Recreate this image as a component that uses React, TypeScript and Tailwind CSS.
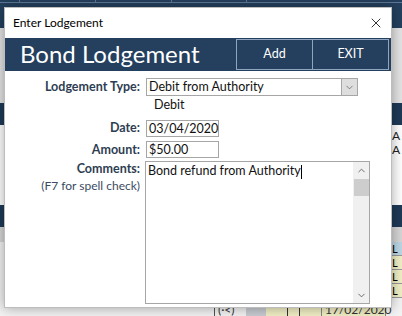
import { X, ChevronDown, ChevronUp } from 'lucide-react';

const font = { fontFamily: 'Lato, "Noto Sans", sans-serif' };

function Field({ label, children }: { label: string; children: React.ReactNode }) {
  return (
    <div className="flex items-center">
      <div className="w-[137px] text-right pr-[6px] text-[12.5px] font-bold text-[#2e3e52]">{label}</div>
      {children}
    </div>
  );
}

export default function App() {
  return (
    <div className="relative w-[402px] h-[316px] overflow-hidden bg-[#f3f3f3] text-[12px]" style={font}>
      {/* background app behind the dialog */}
      <div className="h-[28px] bg-[#24405e] flex items-start">
        <div className="h-[3px] w-full border-b border-[#5f7896] flex">
          <div className="w-[20px] border-r border-[#5f7896]" />
          <div className="w-[76px] border-r border-[#5f7896]" />
          <div className="w-[76px] border-r border-[#5f7896]" />
          <div className="w-[75px] border-r border-[#5f7896]" />
        </div>
      </div>
      <div className="h-[75px] bg-[#e4e4e4]" />
      <div className="h-[22px] bg-[#1f3a57]" />
      <div className="h-[80px] bg-white flex justify-end pt-[4px] text-[#222] text-[12px] leading-[14px]">
        <div className="flex flex-col w-[10px]">
          <span>A</span>
          <span>A</span>
        </div>
      </div>
      <div className="h-[22px] bg-[#1f3a57]" />
      <div className="h-[15px] bg-[#d6d6d6]" />
      <div className="flex flex-col items-end text-[11px] leading-[13px]">
        <div className="w-[10px] h-[14px] bg-[#bcd7e4] border-b border-[#999]">L</div>
        <div className="w-[10px] h-[14px] bg-[#f1efc4] border-b border-[#999]">L</div>
        <div className="w-[10px] h-[14px] bg-[#f1efc4] border-b border-[#999]">L</div>
        <div className="w-[10px] h-[14px] bg-[#f1efc4] border-b border-[#999]">L</div>
      </div>
      <div className="absolute left-[214px] top-[304px] flex text-[12px] leading-[12px] text-[#333]">
        <div className="w-[32px] border-l border-[#555] px-[3px]">(·&lt;)</div>
        <div className="w-[20px] bg-[#c8ccd2]" />
        <div className="w-[22px] bg-[#f1efc4] border-r border-[#333]" />
        <div className="w-[12px] bg-[#f1efc4] border-r border-[#333]" />
        <div className="w-[22px] bg-[#f1efc4] border-r border-[#888]" />
        <div className="w-[64px] bg-[#f1efc4] border-r border-[#888] px-[3px]">17/02/2020</div>
      </div>

      {/* dialog window */}
      <div className="absolute left-[4px] top-[7px] w-[388px] h-[301px] bg-white border border-[#bdbdbd] shadow-[0_0_12px_rgba(0,0,0,0.35)] flex flex-col">
        <div className="h-[30px] flex items-center justify-between pl-[8px] pr-[7px] text-[12px] text-black">
          <span>Enter Lodgement</span>
          <X size={16} strokeWidth={1.2} />
        </div>
        <div className="h-[33px] bg-[#24405e] flex items-center pr-[2px]">
          <div className="flex-1 pl-[15px] text-white text-[24px] leading-none pb-[1px]">Bond Lodgement</div>
          <div className="flex h-[31px] border border-[#8ea4bf]">
            <div className="w-[76px] flex items-center justify-center text-white text-[12.5px] border-r border-[#8ea4bf]">Add</div>
            <div className="w-[75px] flex items-center justify-center text-white text-[12.5px]">EXIT</div>
          </div>
        </div>

        <div className="flex flex-col pt-[7px] pl-[4px]">
          <Field label="Lodgement Type:">
            <div className="w-[212px] h-[18px] border border-[#a6a6a6] flex items-center">
              <span className="flex-1 pl-[2px] text-[12.5px] text-[#111]">Debit from Authority</span>
              <div className="w-[16px] h-full bg-[#dedede] border-l border-[#a6a6a6] flex items-center justify-center">
                <ChevronDown size={11} strokeWidth={1.5} className="text-[#555]" />
              </div>
            </div>
          </Field>
          <div className="pl-[145px] h-[18px] flex items-center text-[12.5px] text-[#111]">Debit</div>
          <div className="h-[4px]" />
          <div className="flex flex-col gap-[3px]">
            <Field label="Date:">
              <div className="w-[73px] h-[17px] border border-[#a6a6a6] pl-[2px] text-[12.5px] leading-[15px] text-[#111]">03/04/2020</div>
            </Field>
            <Field label="Amount:">
              <div className="w-[73px] h-[17px] border border-[#a6a6a6] pl-[2px] text-[12.5px] leading-[15px] text-[#111]">$50.00</div>
            </Field>
          </div>
          <div className="flex mt-[2px]">
            <div className="w-[137px] pr-[6px] text-right flex flex-col">
              <span className="text-[12.5px] font-bold text-[#2e3e52] leading-[15px]">Comments:</span>
              <span className="text-[12px] text-[#3b4b63] leading-[19px]">(F7 for spell check)</span>
            </div>
            <div className="w-[225px] h-[143px] border border-[#a6a6a6] flex -ml-[1px]">
              <div className="flex-1 pl-[2px] pt-[1px] text-[12.5px] text-[#111] leading-[15px]">
                Bond refund from Authority<span className="inline-block w-[1px] h-[14px] bg-black align-middle" />
              </div>
              <div className="w-[16px] bg-[#f0f0f0] flex flex-col items-center">
                <ChevronUp size={11} strokeWidth={2} className="text-[#606060] mt-[3px]" />
                <div className="w-[15px] h-[17px] bg-[#cdcdcd] mt-[3px]" />
                <div className="flex-1" />
                <ChevronDown size={11} strokeWidth={2} className="text-[#606060] mb-[2px]" />
              </div>
            </div>
          </div>
        </div>
      </div>
    </div>
  );
}
